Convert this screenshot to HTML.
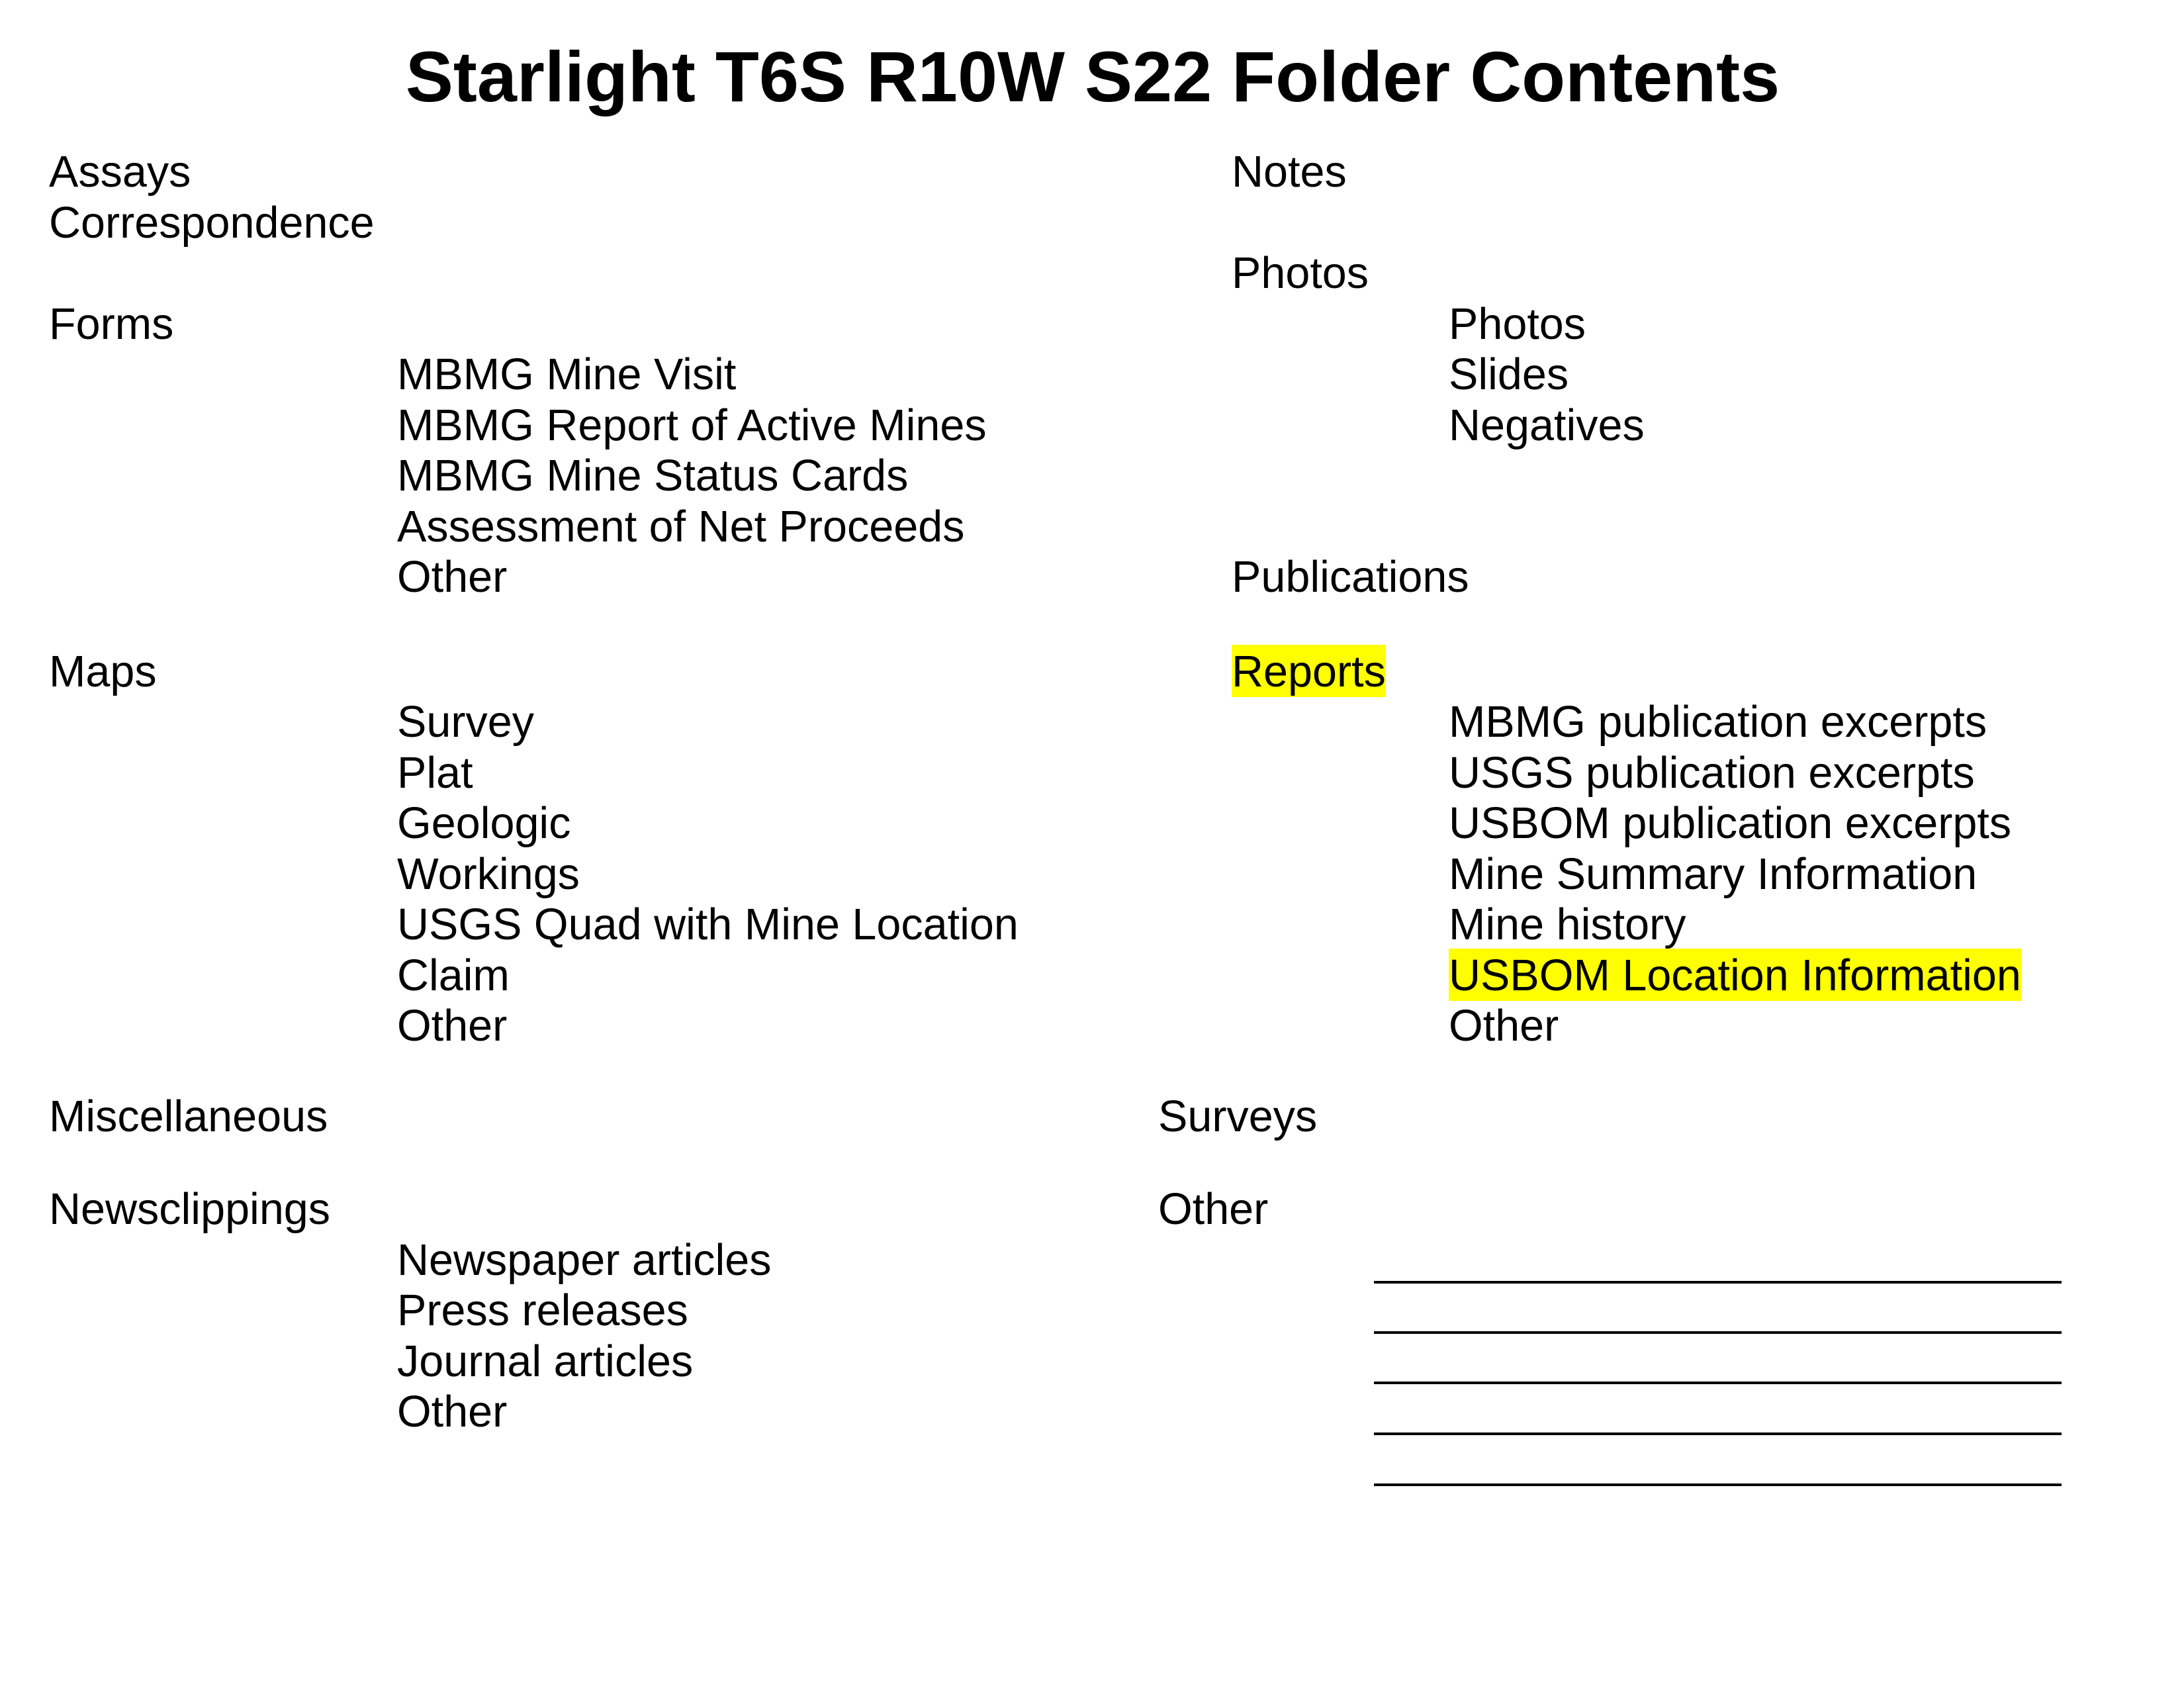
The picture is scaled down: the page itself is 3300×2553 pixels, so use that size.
<!DOCTYPE html>
<html><head><meta charset="utf-8"><style>
html,body{margin:0;padding:0;background:#fff;}
body{width:3300px;height:2550px;position:relative;overflow:hidden;font-family:"Liberation Sans",Arial,sans-serif;color:#000;}
.w{position:absolute;left:0;top:3px;width:3300px;height:2550px;}
.t{position:absolute;font-size:66.5px;line-height:78px;white-space:nowrap;}
.h{background:#ffff00;padding:4px 0 1px;}
.title{position:absolute;left:0;width:3300px;text-align:center;top:56px;font-size:108px;line-height:120px;font-weight:bold;white-space:nowrap;padding-left:2px;box-sizing:border-box;}
.ln{position:absolute;left:2076px;width:1039px;height:4px;background:#000;}
</style></head><body>
<div class="title">Starlight T6S R10W S22 Folder Contents</div>
<div class="w">
<div class="t" style="left:74px;top:218px">Assays</div>
<div class="t" style="left:74px;top:294.5px">Correspondence</div>
<div class="t" style="left:74px;top:447.5px">Forms</div>
<div class="t" style="left:600px;top:524px">MBMG Mine Visit</div>
<div class="t" style="left:600px;top:600.5px">MBMG Report of Active Mines</div>
<div class="t" style="left:600px;top:677px">MBMG Mine Status Cards</div>
<div class="t" style="left:600px;top:753.5px">Assessment of Net Proceeds</div>
<div class="t" style="left:600px;top:830px">Other</div>
<div class="t" style="left:74px;top:972.5px">Maps</div>
<div class="t" style="left:600px;top:1048.5px">Survey</div>
<div class="t" style="left:600px;top:1125.5px">Plat</div>
<div class="t" style="left:600px;top:1201.5px">Geologic</div>
<div class="t" style="left:600px;top:1278.5px">Workings</div>
<div class="t" style="left:600px;top:1354.5px">USGS Quad with Mine Location</div>
<div class="t" style="left:600px;top:1431.5px">Claim</div>
<div class="t" style="left:600px;top:1507.5px">Other</div>
<div class="t" style="left:74px;top:1645px">Miscellaneous</div>
<div class="t" style="left:74px;top:1785px">Newsclippings</div>
<div class="t" style="left:600px;top:1861.5px">Newspaper articles</div>
<div class="t" style="left:600px;top:1938px">Press releases</div>
<div class="t" style="left:600px;top:2014.5px">Journal articles</div>
<div class="t" style="left:600px;top:2091px">Other</div>

<div class="t" style="left:1861px;top:218px">Notes</div>
<div class="t" style="left:1861px;top:371px">Photos</div>
<div class="t" style="left:2189px;top:447.5px">Photos</div>
<div class="t" style="left:2189px;top:524px">Slides</div>
<div class="t" style="left:2189px;top:600.5px">Negatives</div>
<div class="t" style="left:1861px;top:830px">Publications</div>
<div class="t" style="left:1861px;top:972.5px"><span class="h">Reports</span></div>
<div class="t" style="left:2189px;top:1048.5px">MBMG publication excerpts</div>
<div class="t" style="left:2189px;top:1125.5px">USGS publication excerpts</div>
<div class="t" style="left:2189px;top:1201.5px">USBOM publication excerpts</div>
<div class="t" style="left:2189px;top:1278.5px">Mine Summary Information</div>
<div class="t" style="left:2189px;top:1354.5px">Mine history</div>
<div class="t" style="left:2189px;top:1431.5px"><span class="h">USBOM Location Information</span></div>
<div class="t" style="left:2189px;top:1507.5px">Other</div>
<div class="t" style="left:1750px;top:1645px">Surveys</div>
<div class="t" style="left:1750px;top:1785px">Other</div>
</div>
<div class="ln" style="top:1935px"></div>
<div class="ln" style="top:2011px"></div>
<div class="ln" style="top:2087px"></div>
<div class="ln" style="top:2164px"></div>
<div class="ln" style="top:2241px"></div>
</body></html>
